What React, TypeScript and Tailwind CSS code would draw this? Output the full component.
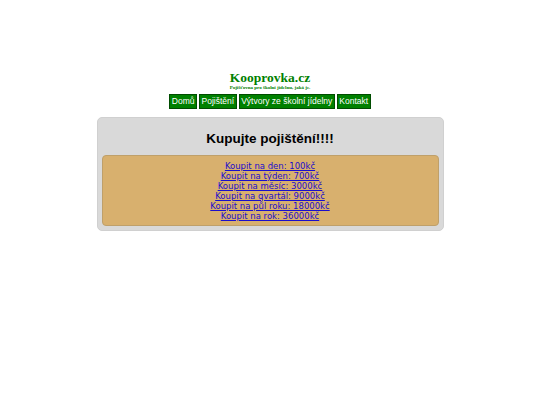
import React from "react";

const links = [
  "Koupit na den: 100kč",
  "Koupit na týden: 700kč",
  "Koupit na měsíc: 3000kč",
  "Koupit na qvartál: 9000kč",
  "Koupit na půl roku: 18000kč",
  "Koupit na rok: 36000kč",
];

const nav = ["Domů", "Pojištění", "Výtvory ze školní jídelny", "Kontakt"];

export default function App() {
  return (
    <div className="w-[540px] h-[405px] bg-white flex flex-col items-center pt-[70px]">
      <div className="flex flex-col items-center [font-family:'Liberation_Serif',serif] text-[#008000] font-bold">
        <div className="text-[13.5px] leading-[16px]">Kooprovka.cz</div>
        <div className="text-[5px] leading-[6px] -mt-[1px]">Pojišťovna pro školní jídelnu, jaká je.</div>
      </div>
      <div className="flex gap-[2px] mt-[3px] [font-family:'Liberation_Sans',sans-serif]">
        {nav.map((n) => (
          <div
            key={n}
            className="bg-[#008000] text-white text-[8.5px] leading-[13px] px-[1.5px] border border-[#004d00]"
          >
            {n}
          </div>
        ))}
      </div>
      <div className="mt-[8px] w-[347px] bg-[#d9d9d9] rounded-[5px] border border-[#d0d0d0] px-[4px] pb-[4px] flex flex-col items-center">
        <div className="[font-family:'Liberation_Sans',sans-serif] font-bold text-[13.5px] leading-[16px] text-black mt-[13px] mb-[8px]">
          Kupujte pojištění!!!!
        </div>
        <div className="w-full bg-[#d8b06e] border border-[#bfa06a] rounded-[4px] pt-[5px] pb-[4px] flex flex-col items-center [font-family:'DejaVu_Sans',sans-serif]">
          {links.map((l) => (
            <a key={l} href="#" className="text-[8.5px] leading-[10px] text-[#1a0dcc] underline">
              {l}
            </a>
          ))}
        </div>
      </div>
    </div>
  );
}
